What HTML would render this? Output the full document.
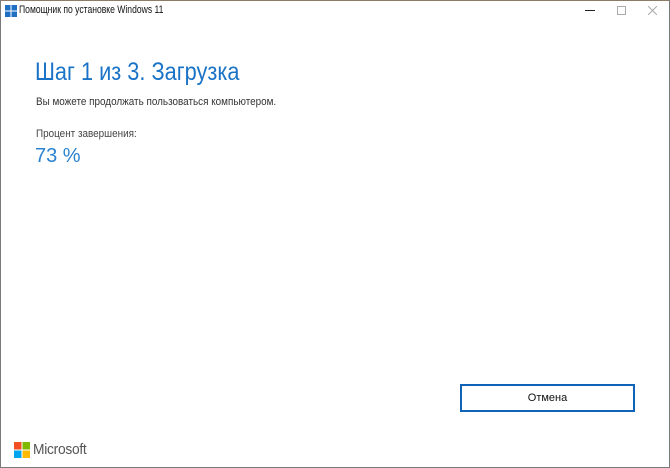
<!DOCTYPE html>
<html><head><meta charset="utf-8"><style>
html,body{margin:0;padding:0;}
body{width:670px;height:468px;position:relative;overflow:hidden;background:#fff;font-family:"Liberation Sans",sans-serif;}
.frame{position:absolute;left:0;top:0;width:668px;height:466px;border:1px solid #7a7a7a;border-top-color:#8c7b6b;}
.t{position:absolute;white-space:nowrap;transform-origin:left top;}
</style></head><body>
<div class="frame"></div>
<svg class="t" style="left:5px;top:5px" width="12" height="12"><rect x="0" y="0" width="5.5" height="5.5" fill="#1f6fc5"/><rect x="6.5" y="0" width="5.5" height="5.5" fill="#1f6fc5"/><rect x="0" y="6.5" width="5.5" height="5.5" fill="#1f6fc5"/><rect x="6.5" y="6.5" width="5.5" height="5.5" fill="#1f6fc5"/></svg>
<div class="t" style="left:19px;top:4px;font-size:11px;color:#111;transform:scaleX(0.78)">Помощник по установке Windows 11</div>
<div class="t" style="left:585px;top:10px;width:10px;height:1px;background:#222"></div>
<div class="t" style="left:617px;top:6px;width:7px;height:7px;border:1px solid #aaa"></div>
<svg class="t" style="left:648px;top:6px" width="9" height="9"><path d="M0 0L9 9M9 0L0 9" stroke="#aaa" stroke-width="1"/></svg>
<div class="t" style="left:35px;top:58px;font-size:25px;color:#1a73c6;transform:scaleX(0.87)">Шаг 1 из 3. Загрузка</div>
<div class="t" style="left:36px;top:96px;font-size:11px;color:#333;transform:scaleX(0.90)">Вы можете продолжать пользоваться компьютером.</div>
<div class="t" style="left:36px;top:128px;font-size:11px;color:#444;transform:scaleX(0.90)">Процент завершения:</div>
<div class="t" style="left:35px;top:145px;font-size:20px;color:#2a82d0">73 %</div>
<div class="t" style="left:460px;top:384px;width:171px;height:24px;border:2px solid #0f64b8;font-size:11px;color:#111;text-align:center;line-height:24px">Отмена</div>
<svg class="t" style="left:14px;top:442px" width="16" height="16"><rect x="0" y="0" width="7.5" height="7.5" fill="#f25022"/><rect x="8.5" y="0" width="7.5" height="7.5" fill="#7fba00"/><rect x="0" y="8.5" width="7.5" height="7.5" fill="#00a4ef"/><rect x="8.5" y="8.5" width="7.5" height="7.5" fill="#ffb900"/></svg>
<div class="t" style="left:33px;top:441px;font-size:15px;color:#555;letter-spacing:-0.3px;transform:scaleX(0.92)">Microsoft</div>
</body></html>
